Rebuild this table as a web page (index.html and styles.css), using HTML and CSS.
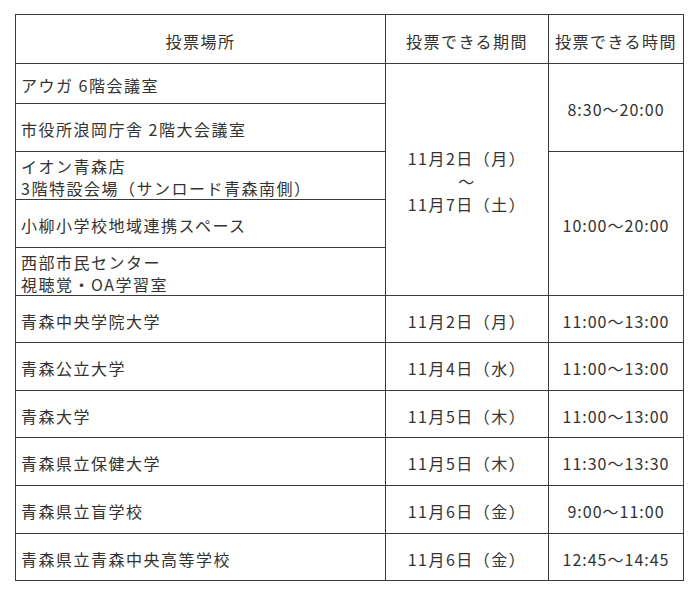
FILE: index.html
```html
<!DOCTYPE html>
<html lang="ja">
<head>
<meta charset="utf-8">
<link rel="stylesheet" href="styles.css">
</head>
<body>
<div class="sheet">
  <div class="cell head">投票場所</div>
  <div class="cell head">投票できる期間</div>
  <div class="cell head">投票できる時間</div>

  <div class="cell place r2">アウガ 6階会議室</div>
  <div class="cell mid period">11月2日（月）<br>～<br>11月7日（土）</div>
  <div class="cell time time-a">8:30～20:00</div>
  <div class="cell place r3">市役所浪岡庁舎 2階大会議室</div>
  <div class="cell place r4">イオン青森店<br>3階特設会場（サンロード青森南側）</div>
  <div class="cell time time-b">10:00～20:00</div>
  <div class="cell place r5">小柳小学校地域連携スペース</div>
  <div class="cell place r6">西部市民センター<br>視聴覚・OA学習室</div>

  <div class="cell place">青森中央学院大学</div>
  <div class="cell mid">11月2日（月）</div>
  <div class="cell time">11:00～13:00</div>

  <div class="cell place">青森公立大学</div>
  <div class="cell mid">11月4日（水）</div>
  <div class="cell time">11:00～13:00</div>

  <div class="cell place">青森大学</div>
  <div class="cell mid">11月5日（木）</div>
  <div class="cell time">11:00～13:00</div>

  <div class="cell place">青森県立保健大学</div>
  <div class="cell mid">11月5日（木）</div>
  <div class="cell time">11:30～13:30</div>

  <div class="cell place">青森県立盲学校</div>
  <div class="cell mid">11月6日（金）</div>
  <div class="cell time">9:00～11:00</div>

  <div class="cell place">青森県立青森中央高等学校</div>
  <div class="cell mid">11月6日（金）</div>
  <div class="cell time">12:45～14:45</div>
</div>
</body>
</html>
```

FILE: styles.css
```css
html, body {
  margin: 0;
  padding: 0;
  background: #ffffff;
}

body {
  font-family: "Noto Sans CJK JP", "Noto Sans", sans-serif;
  font-size: 16px;
  color: #333333;
}

.sheet {
  margin: 14px 0 0 15px;
  width: max-content;
  display: grid;
  grid-template-columns: 369px 162px 134px;
  grid-template-rows: 48px 39px 47px 47px 47px 47px 46px 47px 46px 47px 47px 46px;
  gap: 1px;
  background: #3a3a3a;
  border: 1px solid #3a3a3a;
}

.cell {
  background: #ffffff;
  display: flex;
  align-items: center;
  padding-top: 3px;
  box-sizing: border-box;
  line-height: 22px;
  white-space: nowrap;
  letter-spacing: 1.5px;
}

.head,
.mid,
.time {
  justify-content: center;
  text-align: center;
}

.time {
  letter-spacing: 1px;
}

.place {
  padding-left: 5px;
}

.r2 { grid-column: 1; grid-row: 2; }
.r3 { grid-column: 1; grid-row: 3; }
.r4 { grid-column: 1; grid-row: 4; }
.r5 { grid-column: 1; grid-row: 5; }
.r6 { grid-column: 1; grid-row: 6; }

.period {
  grid-column: 2;
  grid-row: 2 / 7;
  line-height: 23px;
}

.time-a {
  grid-column: 3;
  grid-row: 2 / 4;
}

.time-b {
  grid-column: 3;
  grid-row: 4 / 7;
}
```
